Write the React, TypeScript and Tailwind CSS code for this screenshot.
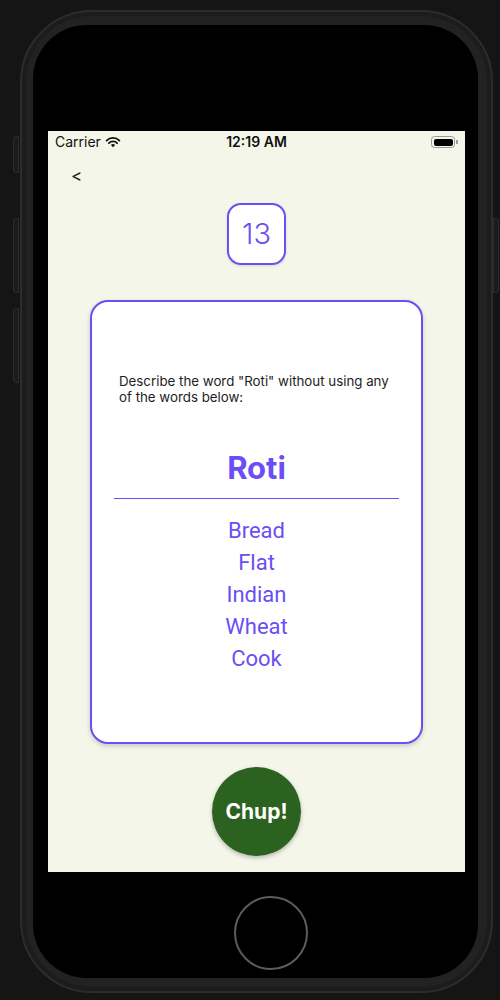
export default function App() {
  const words = ["Bread", "Flat", "Indian", "Wheat", "Cook"];
  return (
    <div className="relative w-[500px] h-[1000px] bg-[#151515] pt-[10px] pl-[20px] font-['Inter','Noto_Sans',sans-serif]">
      {/* side buttons */}
      <div className="absolute left-[13px] top-[136px] w-[6px] h-[37px] rounded-l-[3px] bg-[#1b1b1b] border border-[#2c2c2c]" />
      <div className="absolute left-[13px] top-[218px] w-[6px] h-[75px] rounded-l-[3px] bg-[#1b1b1b] border border-[#2c2c2c]" />
      <div className="absolute left-[13px] top-[308px] w-[6px] h-[75px] rounded-l-[3px] bg-[#1b1b1b] border border-[#2c2c2c]" />
      <div className="absolute left-[493px] top-[218px] w-[6px] h-[75px] rounded-r-[3px] bg-[#1b1b1b] border border-[#2c2c2c]" />

      {/* frame */}
      <div className="w-[473px] h-[983px] rounded-[72px] bg-[#1c1c1c] border-2 border-[#2c2c2c] p-[4px]">
        <div className="w-full h-full rounded-[66px] bg-[#222222] pt-[9px] pb-[9px] pl-[7px] pr-[9px]">
          <div className="w-full h-full rounded-[54px] bg-black flex flex-col items-start pt-[106px] pl-[15px]">
            {/* screen */}
            <div className="w-[417px] h-[741px] bg-[#f4f6e9] flex flex-col">
              {/* status bar */}
              <div className="h-[22px] grid grid-cols-3 items-center px-[7px] text-[14px] text-[#111] leading-none">
                <div className="flex items-center gap-[4px]">
                  <span className="font-normal">Carrier</span>
                  <svg width="16" height="12" viewBox="0 0 16 12" className="mt-[-1px]">
                    <path d="M8 11.2 L5.9 9.1 A3 3 0 0 1 10.1 9.1 Z" fill="#111" />
                    <path d="M3.9 7.1 A5.8 5.8 0 0 1 12.1 7.1" stroke="#111" strokeWidth="1.8" fill="none" strokeLinecap="round" />
                    <path d="M1.6 4.6 A9.1 9.1 0 0 1 14.4 4.6" stroke="#111" strokeWidth="1.8" fill="none" strokeLinecap="round" />
                  </svg>
                </div>
                <div className="text-center font-semibold">12:19 AM</div>
                <div className="flex justify-end items-center">
                  <div className="w-[24px] h-[12px] rounded-[3.5px] border border-[#9a9a9a] p-[1.5px]">
                    <div className="w-full h-full rounded-[2px] bg-black" />
                  </div>
                  <div className="w-[1.5px] h-[4px] rounded-r-[1px] bg-[#9a9a9a] ml-[1px]" />
                </div>
              </div>

              {/* back */}
              <div className="mt-[13px] pl-[23px] text-[17px] leading-[20px] text-[#222]">&lt;</div>

              {/* counter */}
              <div className="mt-[17px] self-center w-[59px] h-[62px] rounded-[14px] border-2 border-[#6b4ef5] bg-white flex items-center justify-center text-[29px] font-light text-[#6b4ef5] shadow-[0_1px_3px_rgba(0,0,0,0.12)]">
                13
              </div>

              {/* card */}
              <div className="mt-[35px] self-center w-[333px] h-[444px] rounded-[18px] border-2 border-[#6b4ef5] bg-white flex flex-col shadow-[0_2px_5px_rgba(0,0,0,0.18)]">
                <p className="mt-[71px] px-[27px] text-[13.3px] leading-[16px] text-[#1d1d1d]">
                  Describe the word "Roti" without using any of the words below:
                </p>
                <div className="mt-[44px] text-center text-[31px] leading-[38px] font-bold text-[#6b4ef5]">Roti</div>
                <div className="mt-[11px] mx-[22px] h-px bg-[#6b4ef5]" />
                <div className="mt-[16px] flex flex-col items-center font-['Roboto','Inter',sans-serif]">
                  {words.map((w) => (
                    <div key={w} className="text-[22px] leading-[32px] text-[#6b4ef5]">
                      {w}
                    </div>
                  ))}
                </div>
              </div>

              {/* Chup */}
              <div className="mt-[23px] self-center w-[89px] h-[89px] rounded-full bg-[#2c621f] flex items-center justify-center text-white text-[21px] font-bold shadow-[0_2px_4px_rgba(0,0,0,0.25)]">
                Chup!
              </div>
            </div>

            {/* home button */}
            <div className="mt-[24px] ml-[186px] w-[74px] h-[74px] rounded-full border-2 border-[#5c5c5c]" />
          </div>
        </div>
      </div>
    </div>
  );
}
